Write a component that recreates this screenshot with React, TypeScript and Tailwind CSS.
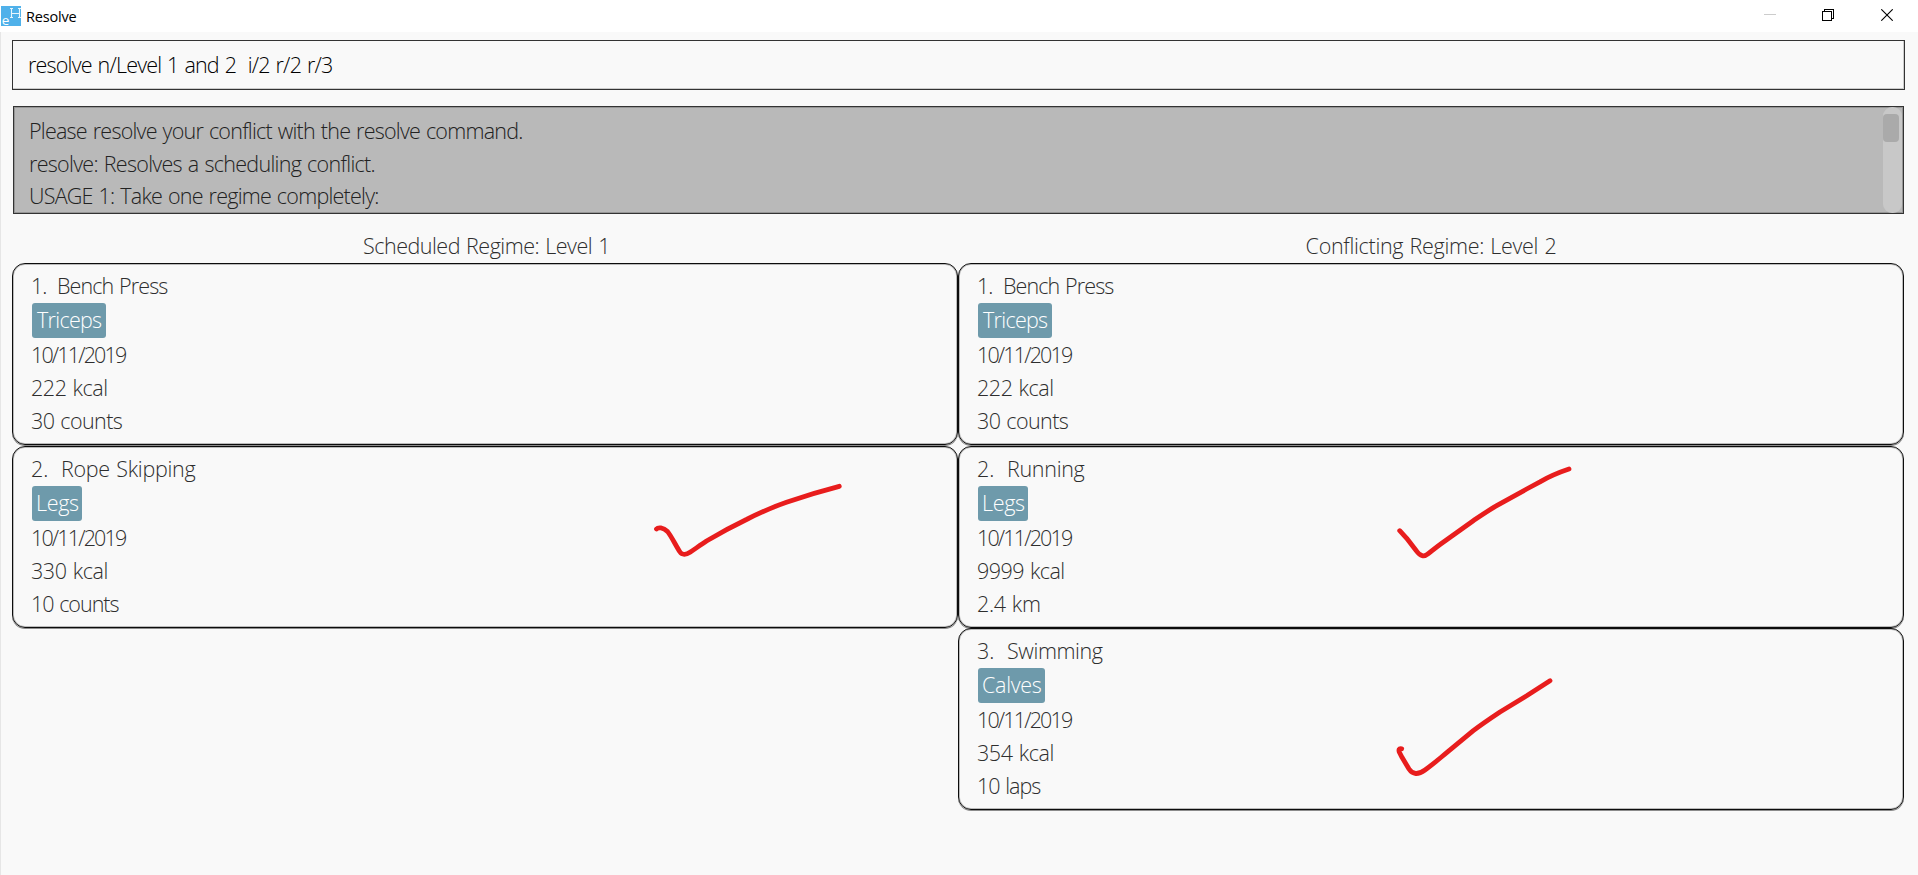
type Exercise = {
  index: string;
  name: string;
  tag: string;
  calories: string;
  quantity: string;
  indexClass: string;
  nameClass: string;
  tagClass: string;
  caloriesClass: string;
  quantityClass: string;
};

const benchPress: Exercise = {
  index: "1.",
  name: "Bench Press",
  tag: "Triceps",
  calories: "222 kcal",
  quantity: "30 counts",
  indexClass: "w-[26px] tracking-[-1px]",
  nameClass: "tracking-[-0.9px]",
  tagClass: "w-[74px] pl-[5px] tracking-[-0.7px]",
  caloriesClass: "tracking-[-0.45px]",
  quantityClass: "tracking-[-0.6px]",
};

const scheduled: Exercise[] = [
  benchPress,
  {
    index: "2.",
    name: "Rope Skipping",
    tag: "Legs",
    calories: "330 kcal",
    quantity: "10 counts",
    indexClass: "w-[30px]",
    nameClass: "tracking-[-0.27px]",
    tagClass: "w-[50px] pl-1 tracking-[-0.35px]",
    caloriesClass: "tracking-[-0.4px]",
    quantityClass: "tracking-[-1px]",
  },
];

const conflicting: Exercise[] = [
  benchPress,
  {
    index: "2.",
    name: "Running",
    tag: "Legs",
    calories: "9999 kcal",
    quantity: "2.4 km",
    indexClass: "w-[30px]",
    nameClass: "tracking-[-0.3px]",
    tagClass: "w-[50px] pl-1 tracking-[-0.35px]",
    caloriesClass: "tracking-[-0.55px]",
    quantityClass: "tracking-[-0.35px]",
  },
  {
    index: "3.",
    name: "Swimming",
    tag: "Calves",
    calories: "354 kcal",
    quantity: "10 laps",
    indexClass: "w-[30px]",
    nameClass: "tracking-[-0.4px]",
    tagClass: "w-[67px] pl-1 tracking-[-0.3px]",
    caloriesClass: "tracking-[-0.4px]",
    quantityClass: "tracking-[-1px]",
  },
];

function AppIcon() {
  return (
    <svg className="h-5 w-5 overflow-visible" viewBox="0 0 20 20">
      <rect width="20" height="20" fill="#4fb1ea" />
      <path
        d="M10.5 2.5V11.5M18.5 2.5V11.5M10.5 7.5H18.5M9 2.5H12M17 2.5H20M9 11.5H12M17 11.5H20"
        stroke="#e6f5fd"
        strokeWidth="1.1"
        fill="none"
      />
      <text x="0.8" y="18.6" fill="#ffffff" fontSize="13.5" fontFamily="Open Sans, sans-serif">
        e
      </text>
    </svg>
  );
}

function TitleBar() {
  return (
    <header className="flex h-8 items-start bg-white">
      <div className="mt-1.5 ml-px">
        <AppIcon />
      </div>
      <span className="ml-[5px] text-[14.5px] leading-[33px] tracking-[-0.2px] text-black">Resolve</span>
      <div className="mt-[9px] mr-[25px] ml-auto flex gap-[47px]">
        <svg className="mr-[-1px] h-3 w-3" viewBox="0 0 12 12" shapeRendering="crispEdges">
          <path d="M0 5.5H12" stroke="#cccccc" />
        </svg>
        <svg className="h-3 w-3" viewBox="0 0 12 12" fill="none" stroke="#000" shapeRendering="crispEdges">
          <path d="M0.5 2.5H9.5V11.5H0.5ZM2.5 2.5V0.5H11.5V9.5H9.5" />
        </svg>
        <svg className="h-3 w-3" viewBox="0 0 12 12" fill="none" stroke="#000" strokeWidth="1.1">
          <path d="M0.3 0.3L11.7 11.7M11.7 0.3L0.3 11.7" />
        </svg>
      </div>
    </header>
  );
}

function ExerciseCard({ item }: { item: Exercise }) {
  return (
    <article className="h-[182px] rounded-[13px] border border-[#0c0c0c] pt-[5px] pl-[18px] text-[#2e2e2e] shadow-[inset_0_0_0_1px_#bbbbbb,0_1px_0_#8c8c8c]">
      <div className="flex">
        <span className={item.indexClass}>{item.index}</span>
        <span className={item.nameClass}>{item.name}</span>
      </div>
      <div className={`mt-px ml-px h-[35px] rounded-[3px] bg-[#6e9aab] text-white ${item.tagClass}`}>{item.tag}</div>
      <div className="tracking-[-1.85px]">10/11/2019</div>
      <div className={item.caloriesClass}>{item.calories}</div>
      <div className={item.quantityClass}>{item.quantity}</div>
    </article>
  );
}

function Regime({ title, titleClass, items }: { title: string; titleClass: string; items: Exercise[] }) {
  return (
    <section className="w-[946px]">
      <h2 className={`mb-px text-center text-[#2e2e2e] ${titleClass}`}>{title}</h2>
      {items.map((item, i) => (
        <div key={item.index} className={i === 1 ? "mt-px" : ""}>
          <ExerciseCard item={item} />
        </div>
      ))}
    </section>
  );
}

function InkMarks() {
  return (
    <svg
      className="pointer-events-none absolute inset-0 h-[875px] w-[1918px]"
      viewBox="0 0 1918 875"
      fill="none"
      stroke="#e81d1d"
      strokeWidth="4.8"
      strokeLinecap="round"
      strokeLinejoin="round"
    >
      <path d="M656.5 529C658 527.2 663 527 667.5 531.5C671 535.5 676 546 680 552C682 555 686 555 690 552.3C697 547.5 702 544 706.5 541C720 533 733 526 746.5 519.5C760 512.5 773 507 786.5 502.3Q813 493 839.3 486.3" />
      <path d="M1399.7 530.7L1406.7 538.3L1416.5 551Q1422 559 1428.3 553.7C1435 548 1441 543.7 1446.7 539.7L1473.3 520.7C1481 515.5 1489 510 1496.7 505.7L1526.7 489L1540 481.8C1550 476 1557 473 1569 469" />
      <path d="M1401.7 748.7C1399 748 1398.4 750 1399.5 752.5L1402 757.3L1409 769Q1414.5 777.5 1425 770C1432 765 1439 759 1446.7 752.7L1473.3 730.7C1482 724 1491 718 1500 712L1526.7 695.7L1550 680.7" />
    </svg>
  );
}

export default function App() {
  return (
    <div className="relative h-[875px] w-[1918px] overflow-hidden bg-[#f9f9f9] font-['Open_Sans','Noto_Sans',sans-serif]">
      <TitleBar />
      <main className="h-[843px] border-l border-[#e6e6e6] pt-2 pl-[11px] text-[21.5px] leading-[33px] font-light [word-spacing:1px]">
        <div className="h-[50px] w-[1893px] border border-[#333333] pt-[7px] pl-[15px] tracking-[-0.8px] whitespace-pre text-black shadow-[inset_-1px_-1px_0_#cccccc]">
          {"resolve n/Level 1 and 2  i/2 r/2 r/3"}
        </div>
        <div className="mt-4 ml-px flex h-[108px] w-[1891px] justify-between border border-[#333333] bg-[#b9b9b9] pr-px shadow-[inset_0_0_0_1px_#969696]">
          <div className="pt-2 pl-[15px] leading-[32.6px] text-[#222222]">
            <p className="tracking-[-0.76px]">Please resolve your conflict with the resolve command.</p>
            <p className="tracking-[-0.7px]">resolve: Resolves a scheduling conflict.</p>
            <p className="tracking-[-0.76px]">USAGE 1: Take one regime completely:</p>
          </div>
          <div className="h-[106px] w-[19px] rounded-[9px] bg-[#c8c8c8] pt-[7px]">
            <div className="h-7 w-4 rounded-[4px] bg-[#aaaaaa]" />
          </div>
        </div>
        <div className="mt-[15px] flex">
          <Regime title="Scheduled Regime: Level 1" titleClass="pl-[3px] tracking-[-0.5px]" items={scheduled} />
          <Regime title="Conflicting Regime: Level 2" titleClass="tracking-[-0.3px]" items={conflicting} />
        </div>
      </main>
      <InkMarks />
    </div>
  );
}
